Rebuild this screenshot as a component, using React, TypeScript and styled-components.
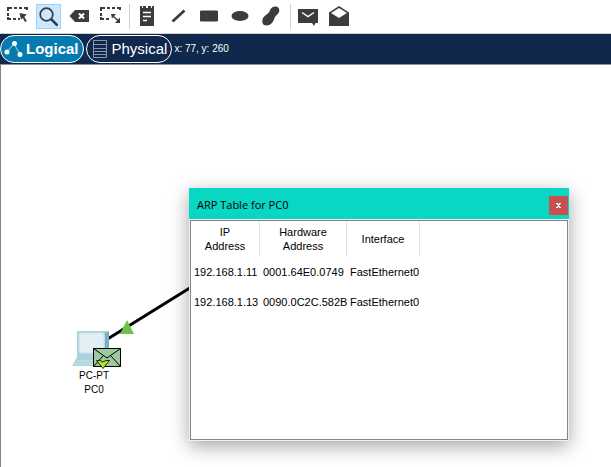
import React from "react";
import styled, { createGlobalStyle } from "styled-components";

const GlobalStyle = createGlobalStyle`
  * { box-sizing: border-box; }
  html, body, #root { height: 100%; margin: 0; }
  body { background: #fff; color: #000; font: 11px/14px "Liberation Sans", Arial, sans-serif; }
`;

const Page = styled.div`
  display: flex;
  flex-direction: column;
  min-height: 100%;
  overflow: hidden;
`;

const Toolbar = styled.div`
  display: flex;
  padding: 4px 0;
  border-bottom: 1px solid #cfd4d0;
`;

const ToolGroup = styled.div`
  display: flex;
  gap: 6px;
  padding: 0 6px 0 5px;
  & + & { border-left: 1px solid #cfcfcf; }
`;

const ToolButton = styled.button<{ $active?: boolean }>`
  width: 25px;
  height: 25px;
  padding: 0;
  border: 0;
  color: #3a3c3e;
  background: ${(p) => (p.$active ? "#cce8ff" : "transparent")};
  box-shadow: ${(p) => (p.$active ? "inset 0 0 0 1px #99d1ff" : "none")};
`;

const Icon = styled.svg`
  display: block;
  width: 25px;
  height: 25px;
`;

const ViewBar = styled.div`
  display: flex;
  align-items: center;
  gap: 2px;
  height: 31px;
  background: #10284c;
  border-bottom: 1px solid #8c8e9c;
  color: #fff;
`;

const ViewButton = styled.button<{ $active?: boolean }>`
  display: flex;
  align-items: center;
  gap: 3px;
  height: 28px;
  padding: 0 4px 0 3px;
  border: 1px solid #fff;
  border-radius: 14px;
  color: #fff;
  background: ${(p) => (p.$active ? "#047aae" : "transparent")};
  font: ${(p) => (p.$active ? "bold" : "normal")} 15px/20px "Liberation Sans", Arial, sans-serif;
`;

const ViewIcon = styled.svg`
  width: 19px;
  height: 20px;
`;

const Coordinates = styled.span`
  font-size: 10px;
`;

const Workspace = styled.main`
  position: relative;
  flex: 1;
  border-left: 1px solid #80828f;
`;

const Cable = styled.svg`
  position: absolute;
  left: 99px;
  top: 215px;
  width: 100px;
  height: 65px;
`;

const Device = styled.figure`
  position: absolute;
  left: 70px;
  top: 264px;
  margin: 0;
  text-align: center;
`;

const DeviceIcon = styled.svg`
  display: block;
  width: 52px;
  height: 40px;
`;

const DeviceLabel = styled.figcaption`
  width: 46px;
  font-size: 10px;
  line-height: 14px;
`;

const Dialog = styled.section`
  position: absolute;
  left: 188px;
  top: 123px;
  width: 380px;
  height: 253px;
  display: flex;
  flex-direction: column;
  padding-bottom: 1px;
  background: #f0f0f5;
  box-shadow: 0 5px 18px rgba(0, 0, 0, 0.36);
`;

const TitleBar = styled.header`
  display: flex;
  align-items: center;
  justify-content: space-between;
  height: 31px;
  padding: 2px 1px 0 8px;
  background: #09d6c3;
`;

const Title = styled.h1`
  margin: 0;
  font: 11px/18px "Open Sans", "Noto Sans", sans-serif;
`;

const CloseButton = styled.button`
  display: grid;
  place-items: center;
  width: 19px;
  height: 19px;
  margin-top: 2px;
  padding: 0;
  border: 0;
  background: #c75050;
`;

const DialogBody = styled.div`
  flex: 1;
  margin: 1px 1px 0;
  border: 1px solid #82838f;
  background: #fff;
`;

const ArpTable = styled.table`
  border-collapse: separate;
  border-spacing: 0;
  table-layout: fixed;
  width: 229px;
  text-align: center;
`;

const Column = styled.col<{ $width: number }>`
  width: ${(p) => p.$width}px;
`;

const HeaderCell = styled.th`
  height: 36px;
  padding: 0;
  border-right: 1px solid #e2e2e2;
  font-weight: normal;
`;

const Cell = styled.td`
  height: 30px;
  padding: 0 3px;
  text-align: left;
  white-space: nowrap;
`;

const tools: { label: string; active?: boolean; art: React.ReactNode }[][] = [
  [
    {
      label: "Select",
      art: (
        <g fill="none" stroke="currentColor" strokeWidth="2">
          <path d="M3 7V4H7M9 4H12M14 4H17M19 4H22V6M3 9V12M3 13V15H6M8 15H11M13 15H15" />
          <path d="M17 11L21 17.500" />
          <path d="M14.500 9L22 10.500L16 15.500Z" fill="currentColor" stroke="none" />
        </g>
      ),
    },
    {
      label: "Inspect",
      active: true,
      art: (
        <g fill="none" stroke="currentColor">
          <circle cx="10.500" cy="10.500" r="6.300" strokeWidth="1.700" />
          <path d="M15 15L21.500 21.500" strokeWidth="2.500" />
        </g>
      ),
    },
    {
      label: "Delete",
      art: (
        <>
          <path d="M2.500 12L8 6H22V18H8Z" fill="currentColor" />
          <path d="M12 9.500L17 14.500M17 9.500L12 14.500" stroke="#fff" strokeWidth="2" />
        </>
      ),
    },
    {
      label: "Resize Shape",
      art: (
        <g fill="none" stroke="currentColor" strokeWidth="2">
          <path d="M3 7V4H7M9 4H12M14 4H17M19 4H22V6M3 9V12M3 13V15H6M8 15H11" />
          <path d="M15.500 12.500L20.500 17" strokeWidth="1.500" />
          <path d="M13 10H18L14 14.500ZM22 13.500V19H17Z" fill="currentColor" stroke="none" />
        </g>
      ),
    },
  ],
  [
    {
      label: "Place Note",
      art: (
        <>
          <path d="M5 2H7V4H8V2H11V4H13V2H16V4H17V2H19V22H5Z" fill="currentColor" />
          <path d="M8 8.500H16M8 12.500H16M8 16.500H12" stroke="#fff" strokeWidth="1.300" />
        </>
      ),
    },
    { label: "Draw Line", art: <path d="M6.500 17.500L18.500 6.500" stroke="currentColor" strokeWidth="2.800" /> },
    { label: "Draw Rectangle", art: <rect x="3" y="6.500" width="18" height="11" rx="1" fill="currentColor" /> },
    { label: "Draw Ellipse", art: <ellipse cx="12" cy="12" rx="8.500" ry="5" fill="currentColor" /> },
    {
      label: "Draw Freeform",
      art: (
        <path
          d="M16.500 2.500C19.500 2.500 21 5 20 8C19 10.500 16.500 11.500 15.500 14C14.500 18 11.500 21.500 7.500 21.500C3.500 21.500 2.500 18 4 14C5.500 11 9 10.500 10.500 7.500C11 4.500 13.500 2.500 16.500 2.500Z"
          fill="currentColor"
        />
      ),
    },
  ],
  [
    {
      label: "Add Simple PDU",
      art: (
        <>
          <path d="M2 5H22V19H19.500L18 22L16 19H2Z" fill="currentColor" />
          <path d="M6 8.500L12 12.500L18 8.500" fill="none" stroke="#fff" strokeWidth="1.500" />
        </>
      ),
    },
    {
      label: "Add Complex PDU",
      art: (
        <>
          <path d="M2 8.500L12 2L22 8.500V22H2Z" fill="currentColor" />
          <path d="M4 9L12 4L20 9L12 14Z" fill="#fff" />
        </>
      ),
    },
  ],
];

const entries = [
  { ip: "192.168.1.11", mac: "0001.64E0.0749", port: "FastEthernet0" },
  { ip: "192.168.1.13", mac: "0090.0C2C.582B", port: "FastEthernet0" },
];

export default function App() {
  return (
    <Page>
      <GlobalStyle />
      <Toolbar role="toolbar">
        {tools.map((group, i) => (
          <ToolGroup key={i}>
            {group.map((tool) => (
              <ToolButton key={tool.label} $active={tool.active} aria-label={tool.label}>
                <Icon viewBox="0 0 25 25">{tool.art}</Icon>
              </ToolButton>
            ))}
          </ToolGroup>
        ))}
      </Toolbar>
      <ViewBar>
        <ViewButton $active>
          <ViewIcon viewBox="0 0 19 20">
            <path d="M3 13L10 4.500L16 15.500" fill="none" stroke="#fff" strokeOpacity="0.7" />
            <g fill="#fff">
              <circle cx="3" cy="13" r="2.500" />
              <circle cx="10.500" cy="4.500" r="2.500" />
              <circle cx="16" cy="15.500" r="2.500" />
            </g>
          </ViewIcon>
          Logical
        </ViewButton>
        <ViewButton>
          <ViewIcon viewBox="0 0 19 20">
            <path
              d="M3.500 1.500H16.500V18.500H3.500ZM3.500 5.500H16.500M3.500 9.500H16.500M3.500 12.500H16.500M3.500 15.500H16.500"
              fill="none"
              stroke="#8796ad"
            />
          </ViewIcon>
          Physical
        </ViewButton>
        <Coordinates>x: 77, y: 260</Coordinates>
      </ViewBar>
      <Workspace>
        <Cable viewBox="0 0 100 65">
          <path d="M6 60L93 6" stroke="#000" strokeWidth="3" />
          <path d="M27 40L34 54H20Z" fill="#6cc24a" />
        </Cable>
        <Device>
          <DeviceIcon viewBox="0 0 52 40">
            <path d="M6 28H33L37 37H1Z" fill="#a9d2dc" />
            <path d="M5 32H35M3 35H36" stroke="#cfe8ed" />
            <path d="M6 2H38V28H6Z" fill="#acd2de" />
            <path d="M34 4L38 2V28L34 25Z" fill="#79afc0" />
            <rect x="8" y="4" width="25" height="20" rx="2" fill="#e3eff5" stroke="#c5e0e9" />
            <path d="M22.500 19.500H49.500V37.500H22.500Z" fill="#9dc99f" stroke="#000" />
            <path d="M22.500 19.500L36 29L49.500 19.500M22.500 37.500L32 27M49.500 37.500L40 27" fill="none" stroke="#000" />
            <path d="M25.500 31.500H29L32 33L35 31.500H38.500L32 39.500Z" fill="#b5e61d" stroke="#222" />
          </DeviceIcon>
          <DeviceLabel>
            PC-PT
            <br />
            PC0
          </DeviceLabel>
        </Device>
        <Dialog role="dialog" aria-labelledby="arp-title">
          <TitleBar>
            <Title id="arp-title">ARP Table for PC0</Title>
            <CloseButton aria-label="Close">
              <svg width="5" height="5" viewBox="0 0 5 5" shapeRendering="crispEdges">
                <path d="M0 0H2V1H3V0H5V1H4V2H3V3H4V4H5V5H3V4H2V5H0V4H1V3H2V2H1V1H0Z" fill="#fff" />
              </svg>
            </CloseButton>
          </TitleBar>
          <DialogBody>
            <ArpTable>
              <colgroup>
                <Column $width={69} />
                <Column $width={87} />
                <Column $width={73} />
              </colgroup>
              <thead>
                <tr>
                  <HeaderCell>IP<br />Address</HeaderCell>
                  <HeaderCell>Hardware<br />Address</HeaderCell>
                  <HeaderCell>Interface</HeaderCell>
                </tr>
              </thead>
              <tbody>
                {entries.map((entry) => (
                  <tr key={entry.ip}>
                    <Cell>{entry.ip}</Cell>
                    <Cell>{entry.mac}</Cell>
                    <Cell>{entry.port}</Cell>
                  </tr>
                ))}
              </tbody>
            </ArpTable>
          </DialogBody>
        </Dialog>
      </Workspace>
    </Page>
  );
}
